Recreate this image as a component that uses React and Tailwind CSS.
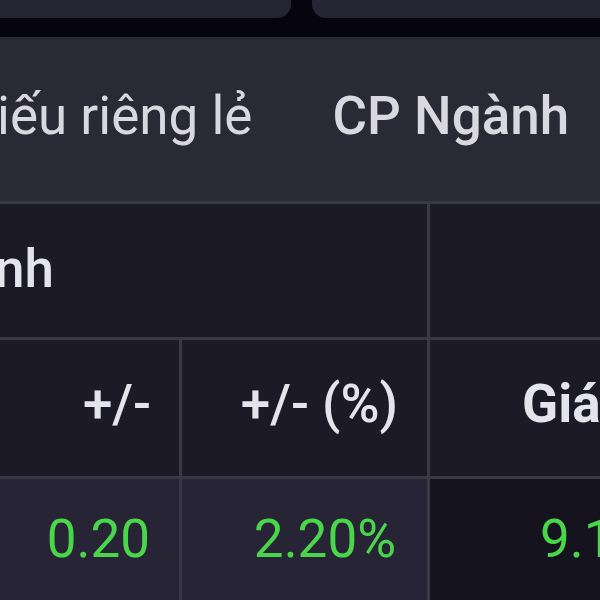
import React from "react";

export default function App() {
  const font = { fontFamily: "Roboto, 'Noto Sans', sans-serif" };
  return (
    <div
      className="w-[600px] h-[600px] overflow-hidden bg-[#06050f] text-[53px] leading-[53px]"
      style={font}
    >
      {/* top cards */}
      <div className="flex h-[18px]">
        <div className="w-[291px] shrink-0 h-full bg-[#252432] rounded-br-[14px]" />
        <div className="ml-[21px] flex-1 h-full bg-[#252432] rounded-bl-[14px]" />
      </div>

      {/* tabs panel */}
      <div className="mt-[19px] h-[164px] bg-[#2a2936] flex items-start pt-[53px] whitespace-nowrap">
        <span className="ml-[-3px] text-[#d9d8e0]">iếu riêng lẻ</span>
        <span className="ml-[80px] text-[#d9d8e0] font-medium">CP Ngành</span>
      </div>

      {/* table */}
      <div className="border-t-[3px] border-[#393846] bg-[#1c1a27]">
        {/* header row 1 */}
        <div className="flex h-[133px]">
          <div className="w-[427px] shrink-0 pt-[39px] whitespace-nowrap">
            <span className="ml-[-5px] text-[#e4e4ec] font-medium">nh</span>
          </div>
          <div className="flex-1 min-w-0 border-l-[3px] border-[#393846]" />
        </div>

        {/* header row 2 */}
        <div className="flex h-[139px] border-t-[3px] border-[#393846]">
          <div className="w-[179px] shrink-0 pt-[38px] pr-[28px] text-right text-[#e4e4ec] font-medium">+/-</div>
          <div className="w-[248px] shrink-0 border-l-[3px] border-[#393846] pt-[38px] pr-[29px] text-right text-[#e4e4ec] font-medium whitespace-nowrap">
            +/- (%)
          </div>
          <div className="flex-1 min-w-0 overflow-hidden border-l-[3px] border-[#393846] pt-[38px] pl-[92px] text-[#e4e4ec] font-bold whitespace-nowrap">
            Giá
          </div>
        </div>

        {/* data row */}
        <div className="flex h-[125px] border-t-[3px] border-[#393846]">
          <div className="w-[179px] shrink-0 bg-[#272535] pt-[34px] pr-[29px] text-right text-[#4ad64a]">0.20</div>
          <div className="w-[248px] shrink-0 border-l-[3px] border-[#393846] bg-[#272535] pt-[34px] pr-[31px] text-right text-[#4ad64a] whitespace-nowrap">
            2.20%
          </div>
          <div className="flex-1 min-w-0 overflow-hidden border-l-[3px] border-[#393846] bg-[#15131e] pt-[34px] pl-[110px] text-[#4ad64a] whitespace-nowrap">
            9.10
          </div>
        </div>
      </div>
    </div>
  );
}
